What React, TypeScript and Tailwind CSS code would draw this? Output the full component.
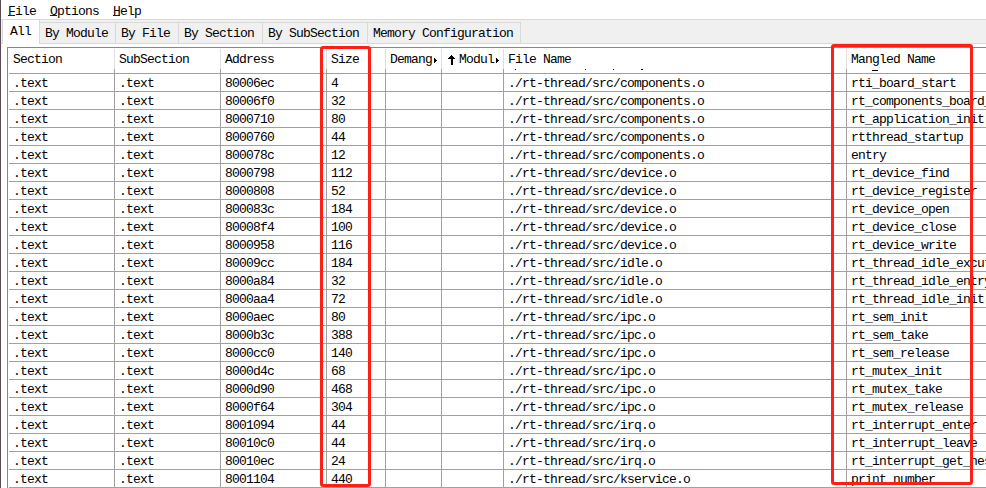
import React from "react";

type Row = [string, string, string, string];

const C = "./rt-thread/src/components.o";
const D = "./rt-thread/src/device.o";
const I = "./rt-thread/src/idle.o";
const P = "./rt-thread/src/ipc.o";
const Q = "./rt-thread/src/irq.o";

const rows: Row[] = [
  ["80006ec", "4", C, "rti_board_start"],
  ["80006f0", "32", C, "rt_components_board_"],
  ["8000710", "80", C, "rt_application_init"],
  ["8000760", "44", C, "rtthread_startup"],
  ["800078c", "12", C, "entry"],
  ["8000798", "112", D, "rt_device_find"],
  ["8000808", "52", D, "rt_device_register"],
  ["800083c", "184", D, "rt_device_open"],
  ["80008f4", "100", D, "rt_device_close"],
  ["8000958", "116", D, "rt_device_write"],
  ["80009cc", "184", I, "rt_thread_idle_excut"],
  ["8000a84", "32", I, "rt_thread_idle_entry"],
  ["8000aa4", "72", I, "rt_thread_idle_init"],
  ["8000aec", "80", P, "rt_sem_init"],
  ["8000b3c", "388", P, "rt_sem_take"],
  ["8000cc0", "140", P, "rt_sem_release"],
  ["8000d4c", "68", P, "rt_mutex_init"],
  ["8000d90", "468", P, "rt_mutex_take"],
  ["8000f64", "304", P, "rt_mutex_release"],
  ["8001094", "44", Q, "rt_interrupt_enter"],
  ["80010c0", "44", Q, "rt_interrupt_leave"],
  ["80010ec", "24", Q, "rt_interrupt_get_nes"],
  ["8001104", "440", "./rt-thread/src/kservice.o", "print_number"],
];

const tabs = [
  { label: "By Module", width: "w-[76px]" },
  { label: "By File", width: "w-[63px]" },
  { label: "By Section", width: "w-[84px]" },
  { label: "By SubSection", width: "w-[105px]" },
  { label: "Memory Configuration", width: "w-[153px]" },
];

const columns =
  "grid grid-cols-[106px_106px_106px_59px_56px_62px_343px_139px]";

function MoreArrow() {
  return (
    <svg
      width="4"
      height="5"
      viewBox="0 0 4 5"
      shapeRendering="crispEdges"
      className="ml-0.5 mt-0.5 shrink-0"
    >
      <path d="M0 0H1V1H2V2H3V3H2V4H1V5H0Z" fill="#000" />
    </svg>
  );
}

function SortArrow() {
  return (
    <svg
      width="7"
      height="10"
      viewBox="0 0 7 10"
      shapeRendering="crispEdges"
      className="mr-1 ml-0.5 shrink-0"
    >
      <path d="M3 0H4V1H5V2H6V3H7V4H4V10H3V4H0V3H1V2H2V1H3Z" fill="#000" />
      <path d="M3 3H5V10H3Z" fill="#000" />
    </svg>
  );
}

/* Lower edge of the row that is scrolled under the header. */
function Remnant({ marks }: { marks: [number, number, number][] }) {
  return (
    <svg width="135" height="4" viewBox="0 0 135 4" shapeRendering="crispEdges">
      {marks.map(([x, y, w]) => (
        <rect key={x} x={x} y={y} width={w} height="1" fill="#000" />
      ))}
    </svg>
  );
}

function HeaderCell({
  children,
  last,
  marks,
}: {
  children: React.ReactNode;
  last?: boolean;
  marks?: [number, number, number][];
}) {
  return (
    <div className="flex flex-col">
      <div
        className={`flex h-5 items-center pt-px pl-1 leading-[19px] ${last ? "" : "border-r border-[#e0e0e0]"}`}
      >
        {children}
      </div>
      <div className={`h-1 pl-1 ${last ? "" : "border-r border-[#a0a0a0]"}`}>
        {marks && <Remnant marks={marks} />}
      </div>
    </div>
  );
}

function Cell({ children, last }: { children?: React.ReactNode; last?: boolean }) {
  return (
    <div
      className={`h-[17px] pl-1 leading-5 ${last ? "" : "border-r border-[#a0a0a0]"}`}
    >
      {children}
    </div>
  );
}

export default function App() {
  return (
    <div className="relative flex h-[488px] w-[986px] flex-col overflow-hidden border-l border-[#5b4b55] bg-white font-['Liberation_Mono',monospace] text-[13px] tracking-[-0.8px] whitespace-pre text-black">
      <nav className="flex h-[19px] shrink-0 gap-3.5 pt-1 pl-[7px] leading-4">
        {["File", "Options", "Help"].map((m) => (
          <span key={m}>
            <span className="inline-block h-3 w-[7px] border-b border-[#0000ff] align-top leading-4">
              {m[0]}
            </span>
            {m.slice(1)}
          </span>
        ))}
      </nav>
      <div className="flex h-[25px] shrink-0 border-t border-b border-[#d9d9d9] bg-[#f0f0f0]">
        <div className="-mb-px ml-px flex w-[38px] items-center border-r border-l border-[#d9d9d9] bg-white pl-[7px]">
          All
        </div>
        <div className="mt-0.5 flex border-t border-[#d9d9d9]">
          {tabs.map((t) => (
            <div
              key={t.label}
              className={`flex items-center border-r border-[#d9d9d9] pt-0.5 pl-[5px] ${t.width}`}
            >
              {t.label}
            </div>
          ))}
        </div>
      </div>
      <div className="mt-[3px] ml-1.5 flex grow flex-col border-t border-l border-[#828790] pl-px">
        <div className={`${columns} h-[26px] shrink-0 border-b border-[#a0a0a0] pt-px`}>
          <HeaderCell>Section</HeaderCell>
          <HeaderCell>SubSection</HeaderCell>
          <HeaderCell>Address</HeaderCell>
          <HeaderCell>Size</HeaderCell>
          <HeaderCell>
            Demang
            <MoreArrow />
          </HeaderCell>
          <HeaderCell>
            <SortArrow />
            Modul
            <MoreArrow />
          </HeaderCell>
          <HeaderCell
            marks={[
              [7, 0, 1],
              [77, 0, 1],
              [105, 0, 1],
              [133, 0, 2],
            ]}
          >
            File Name
          </HeaderCell>
          <HeaderCell last marks={[[21, 1, 6]]}>
            Mangled Name
          </HeaderCell>
        </div>
        {rows.map(([address, size, file, name]) => (
          <div key={address} className={`${columns} h-[18px] shrink-0 border-b border-[#a0a0a0]`}>
            <Cell>.text</Cell>
            <Cell>.text</Cell>
            <Cell>{address}</Cell>
            <Cell>{size}</Cell>
            <Cell />
            <Cell />
            <Cell>{file}</Cell>
            <Cell last>{name}</Cell>
          </div>
        ))}
      </div>
      <div className="absolute top-[46px] left-[319px] h-[441px] w-[51px] rounded-[3px] border-3 border-[#ff2015]" />
      <div className="absolute top-[44px] left-[830px] h-[441px] w-[142px] rounded-[3px] border-3 border-[#ff2015]" />
    </div>
  );
}
